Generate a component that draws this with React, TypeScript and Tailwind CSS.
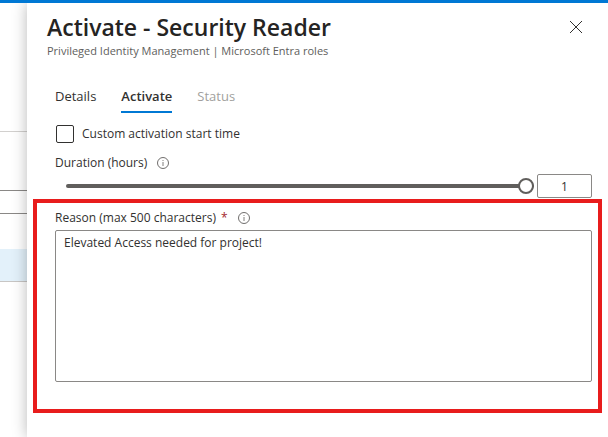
import { useState } from 'react'

const tabs = [
  { id: 'details', label: 'Details', disabled: false },
  { id: 'activate', label: 'Activate', disabled: false },
  { id: 'status', label: 'Status', disabled: true },
]

function InfoIcon() {
  return (
    <svg width="12" height="12" viewBox="0 0 12 12" fill="none" stroke="#605e5c" aria-hidden="true">
      <circle cx="6" cy="6" r="5.5" strokeWidth="0.9" />
      <path d="M6 5v4M6 3v1" strokeWidth="0.8" />
    </svg>
  )
}

function CloseIcon() {
  return (
    <svg width="12" height="12" viewBox="0 0 12 12" fill="none" stroke="#323130" strokeWidth="1" aria-hidden="true">
      <path d="M0 0l12 12M12 0L0 12" />
    </svg>
  )
}

// Strip of the page that stays visible behind the open panel
function PageBehind() {
  return (
    <div className="flex w-[27px] shrink-0 flex-col bg-white">
      <div className="h-[129px] border-b border-[#d2d0ce]" />
      <div className="h-[59px] border-b border-[#8a8886]" />
      <div className="h-[23px] border-b border-[#8a8886]" />
      <div className="h-[35px]" />
      <div className="h-[33px] border-b border-[#c8c6c4] bg-[#e3f1fa]" />
    </div>
  )
}

export default function App() {
  const [activeTab, setActiveTab] = useState('activate')
  const [customStart, setCustomStart] = useState(false)
  const [hours, setHours] = useState(1)
  const [reason, setReason] = useState('Elevated Access needed for project!')

  return (
    <div className="flex min-h-screen flex-col border-t-3 border-[#0078d4] bg-white font-['Segoe_UI','Open_Sans',sans-serif] text-[13px] text-[#323130]">
      <div className="flex flex-1 overflow-hidden">
        <PageBehind />
        <main className="min-w-0 flex-1 bg-white pt-2 shadow-[0_0_14px_rgba(0,0,0,0.28)]">
          <header className="flex items-start justify-between pr-[26px] pl-5">
            <div>
              <h1 className="text-[23px] leading-8 font-semibold text-[#252423]">Activate - Security Reader</h1>
              <p className="text-[11px] leading-4 text-[#605e5c]">
                Privileged Identity Management | Microsoft Entra roles
              </p>
            </div>
            <button type="button" aria-label="Close" className="mt-[10px]">
              <CloseIcon />
            </button>
          </header>

          <div role="tablist" className="mt-7 flex gap-[25px] pl-7">
            {tabs.map((tab) => (
              <button
                key={tab.id}
                type="button"
                role="tab"
                aria-selected={activeTab === tab.id}
                disabled={tab.disabled}
                onClick={() => setActiveTab(tab.id)}
                className="border-b-2 border-transparent pb-[6px] leading-[18px] disabled:text-[#a19f9d] aria-selected:border-[#0078d4] aria-selected:font-semibold"
              >
                {tab.label}
              </button>
            ))}
          </div>

          <div className="mt-3 flex items-center gap-2 pl-[29px] text-xs">
            <input
              id="custom-start"
              type="checkbox"
              checked={customStart}
              onChange={(event) => setCustomStart(event.target.checked)}
              className="size-[18px] appearance-none rounded-xs border border-[#323130] bg-white checked:bg-[#0078d4]"
            />
            <label htmlFor="custom-start" className="leading-4">Custom activation start time</label>
          </div>

          <div className="mt-3 flex items-center gap-[10px] pl-7 text-xs">
            <label htmlFor="duration" className="leading-4">Duration (hours)</label>
            <InfoIcon />
          </div>
          <div className="mt-[3px] flex items-center gap-[3px] pr-4 pl-[39px]">
            <input
              id="duration"
              type="range"
              min={0}
              max={1}
              step={0.5}
              value={hours}
              onChange={(event) => setHours(Number(event.target.value))}
              className="h-1 min-w-0 flex-1 appearance-none rounded-full bg-[#605e5c] [&::-webkit-slider-thumb]:size-4 [&::-webkit-slider-thumb]:appearance-none [&::-webkit-slider-thumb]:rounded-full [&::-webkit-slider-thumb]:border-2 [&::-webkit-slider-thumb]:border-[#605e5c] [&::-webkit-slider-thumb]:bg-white"
            />
            <input
              type="text"
              aria-label="Duration value"
              value={hours}
              onChange={(event) => setHours(Number(event.target.value) || 0)}
              className="h-6 w-[55px] rounded-xs border border-[#8a8886] text-center text-xs"
            />
          </div>

          <section className="mx-[6px] mt-px border-4 border-[#e81c1c] pt-[7px] pr-[6px] pb-[27px] pl-[18px]">
            <div className="flex items-center gap-[10px] text-xs">
              <label htmlFor="reason" className="leading-4">
                Reason (max 500 characters)<span className="ml-[5px] text-[#a4262c]">*</span>
              </label>
              <InfoIcon />
            </div>
            <textarea
              id="reason"
              required
              maxLength={500}
              value={reason}
              onChange={(event) => setReason(event.target.value)}
              className="mt-1 block h-[152px] w-full resize-none rounded-xs border border-[#8a8886] px-2 py-1 text-xs leading-4"
            />
          </section>
        </main>
      </div>
    </div>
  )
}
